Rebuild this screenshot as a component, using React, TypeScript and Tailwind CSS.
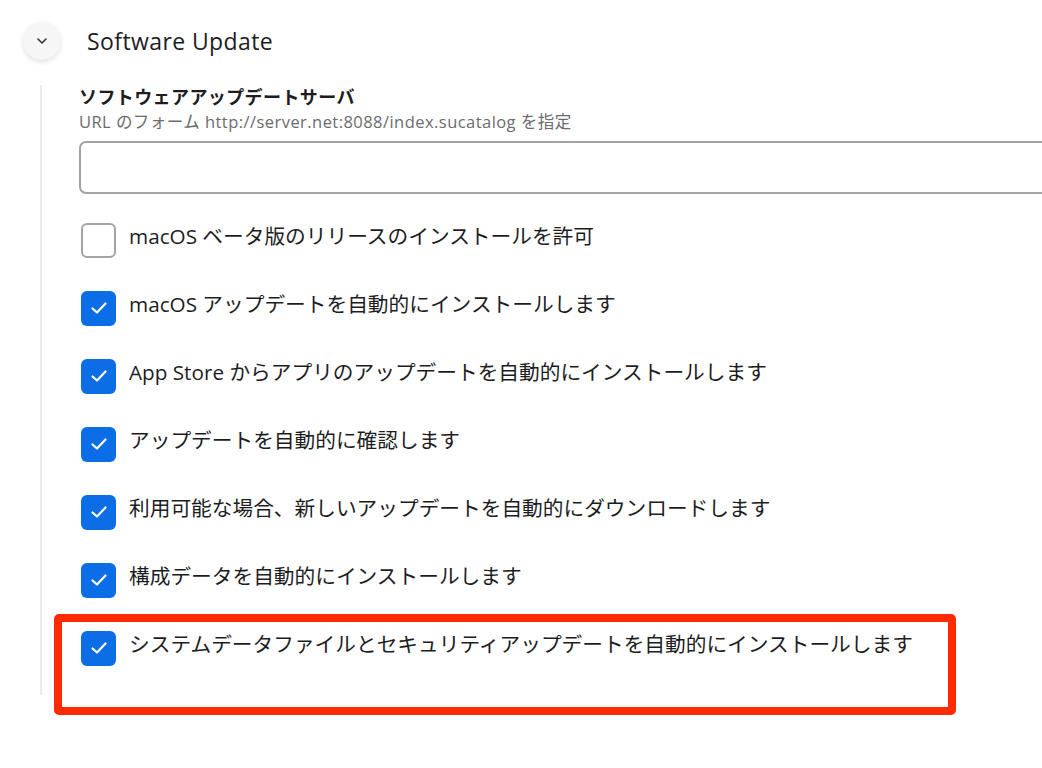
import React from "react";

const items: { label: string; checked: boolean }[] = [
  { label: "macOS ベータ版のリリースのインストールを許可", checked: false },
  { label: "macOS アップデートを自動的にインストールします", checked: true },
  { label: "App Store からアプリのアップデートを自動的にインストールします", checked: true },
  { label: "アップデートを自動的に確認します", checked: true },
  { label: "利用可能な場合、新しいアップデートを自動的にダウンロードします", checked: true },
  { label: "構成データを自動的にインストールします", checked: true },
  { label: "システムデータファイルとセキュリティアップデートを自動的にインストールします", checked: true },
];

function Check({ checked }: { checked: boolean }) {
  if (!checked) {
    return (
      <div className="w-[35px] h-[35px] shrink-0 rounded-[6px] border-2 border-[#a4a4a8] bg-white" />
    );
  }
  return (
    <div className="w-[35px] h-[35px] shrink-0 rounded-[6px] bg-[#0b6ee6] flex items-center justify-center">
      <svg width="18" height="14" viewBox="0 0 18 14" fill="none">
        <path d="M2.5 7.5 L7 11.5 L15.5 2.5" stroke="white" strokeWidth="2.2" strokeLinecap="round" strokeLinejoin="round" />
      </svg>
    </div>
  );
}

export default function App() {
  const font = { fontFamily: '"Open Sans", "Noto Sans CJK JP", sans-serif' };
  return (
    <div className="relative w-[1042px] h-[768px] bg-white overflow-hidden text-[#1d1d1f]" style={font}>
      <div className="flex items-center pt-[22px] pl-[23px]">
        <div className="w-[38px] h-[38px] rounded-full bg-[#f6f6f7] shadow-[0_2px_5px_rgba(0,0,0,0.12)] flex items-center justify-center">
          <svg width="12" height="8" viewBox="0 0 12 8" fill="none">
            <path d="M2 2 L6 6 L10 2" stroke="#333" strokeWidth="1.6" strokeLinecap="round" strokeLinejoin="round" />
          </svg>
        </div>
        <div className="ml-[26px] text-[23px] tracking-[0.4px] leading-[30px] -mt-[1px] text-[#1d1d1f]">Software Update</div>
      </div>
      <div className="ml-[40px] mt-[27px] border-l-2 border-[#ececec] pl-[37px] pb-[13px]">
        <div className="text-[18px] leading-[24px] -mt-[2px] font-bold tracking-[0.4px] text-[#1d1d1f]">ソフトウェアアップデートサーバ</div>
        <div className="text-[16.5px] tracking-[0.45px] leading-[22px] text-[#6b6b70] mt-[2px]">URL のフォーム http://server.net:8088/index.sucatalog を指定</div>
        <div className="mt-[8px] h-[53px] w-[1000px] rounded-[7px] border-2 border-[#a2a3a7] bg-white" />
        <div className="mt-[12px]">
          {items.map((it, i) => (
            <div key={i} className="h-[68px] flex items-center pl-[2px]">
              <Check checked={it.checked} />
              <div className="ml-[13px] text-[20.7px] leading-[28px] -mt-[9px] text-[#1d1d1f]">{it.label}</div>
            </div>
          ))}
        </div>
      </div>
      <div className="absolute left-[54px] top-[614px] w-[902px] h-[101px] border-[8px] border-[#ff2a00] rounded-[5px]" />
    </div>
  );
}
